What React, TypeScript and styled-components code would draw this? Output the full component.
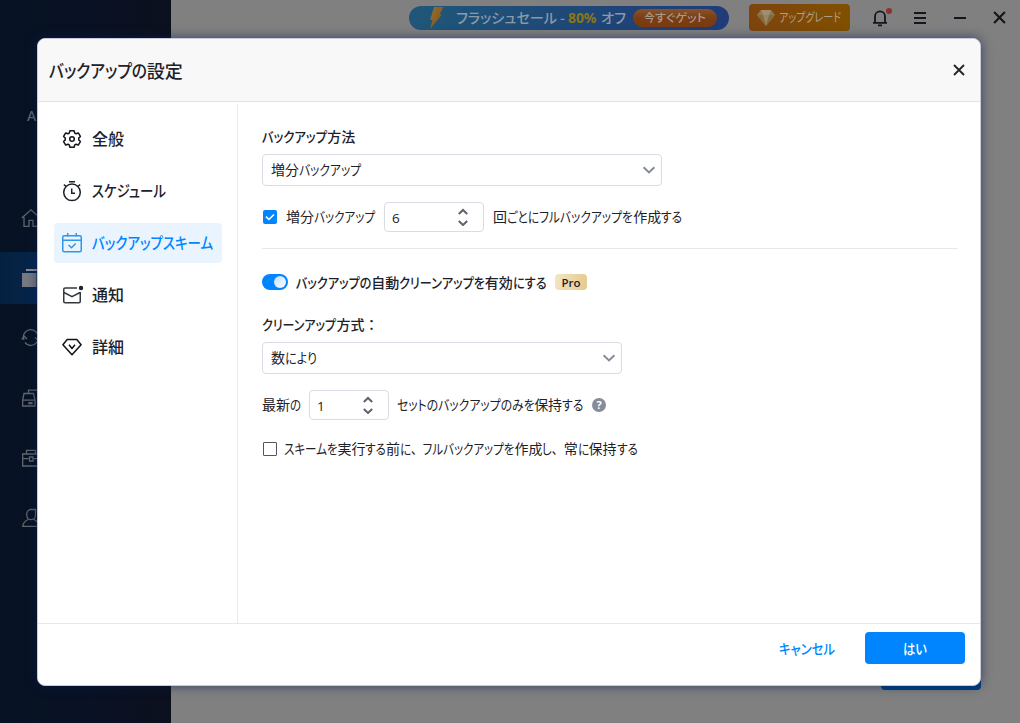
import React, { useLayoutEffect, useRef } from "react";
import styled, { createGlobalStyle } from "styled-components";

const GlobalStyle = createGlobalStyle`
  * { box-sizing: border-box; }
  html, body { margin: 0; padding: 0; overflow: hidden; }
  body { font-family: "Noto Sans CJK JP", "Noto Sans", sans-serif; color: #1d2129; }
  svg { display: block; flex: none; }
`;

/* ---------- Text with condensed kana ---------- */

const Line = styled.span<{ $size: number; $weight: number; $color?: string; $width: number; $lift: number }>`
  display: block;
  flex: none;
  width: ${(p) => p.$width}px;
  padding-bottom: ${(p) => p.$lift * 2}px;
  font-size: ${(p) => p.$size}px;
  font-weight: ${(p) => p.$weight};
  color: ${(p) => p.$color ?? "#1d2129"};
  line-height: 20px;
  white-space: nowrap;
  font-feature-settings: "palt";
`;

const KanaSlot = styled.span`
  display: inline-block;
`;

const KanaRun = styled.span`
  display: inline-block;
  transform-origin: 0 50%;
`;

const FullWidth = styled.span`
  font-feature-settings: normal;
`;

type LabelProps = { text: string; width: number; size?: number; weight?: number; color?: string; lift?: number };

function Label({ text, width, size = 14, weight = 400, color, lift = 1 }: LabelProps) {
  const ref = useRef<HTMLSpanElement>(null);
  const runs = text.match(/[\u3040-\u30ff、]+|：|[^\u3040-\u30ff、：]+/g) ?? [];

  useLayoutEffect(() => {
    const line = ref.current;
    if (!line) return;
    const kana = Array.from(line.querySelectorAll<HTMLElement>("[data-kana]"));
    const natural = kana.map((k) => k.offsetWidth);
    const kanaTotal = natural.reduce((a, b) => a + b, 0);
    const range = document.createRange();
    range.selectNodeContents(line);
    const total = range.getBoundingClientRect().width;
    if (!kanaTotal || !total) return;
    const factor = (width - (total - kanaTotal)) / kanaTotal;
    kana.forEach((k, i) => {
      k.style.transform = `scaleX(${factor})`;
      (k.parentElement as HTMLElement).style.width = `${natural[i] * factor}px`;
    });
  }, [text, width]);

  return (
    <Line ref={ref} $size={size} $weight={weight} $color={color} $width={width} $lift={lift}>
      {runs.map((r, i) => {
        if (r === "：") return <FullWidth key={i}>{r}</FullWidth>;
        if (!/[\u3040-\u30ff、]/.test(r)) return <React.Fragment key={i}>{r}</React.Fragment>;
        return (
          <KanaSlot key={i}>
            <KanaRun data-kana>
              {r.split(/(、)/).map((s, j) => (s === "、" ? <FullWidth key={j}>{s}</FullWidth> : s))}
            </KanaRun>
          </KanaSlot>
        );
      })}
    </Line>
  );
}

/* ---------- Application window behind the dialog ---------- */

const Window = styled.div`
  position: relative;
  display: flex;
  width: 1020px;
  height: 723px;
  overflow: hidden;
  background: #808080;
`;

const Sidebar = styled.aside`
  display: flex;
  flex-direction: column;
  width: 171px;
  height: 100%;
  background: linear-gradient(90deg, #061323 0%, #091124 50%, #0c101e 100%);
`;

const Account = styled.div`
  height: 192px;
  padding: 106px 0 0 27px;
  font: 500 14px/20px "Noto Sans", sans-serif;
  color: #66696f;
`;

const SideItem = styled.div<{ $active?: boolean }>`
  display: flex;
  align-items: center;
  height: 52px;
  margin-bottom: 8px;
  padding-left: 21px;
  background: ${(p) => (p.$active ? "linear-gradient(90deg, #05203f, #0a3c80)" : "none")};
`;

const Main = styled.main`
  display: flex;
  flex-direction: column;
  justify-content: space-between;
  flex: 1;
`;

const TitleBar = styled.header`
  display: flex;
  align-items: center;
  height: 35px;
  padding-left: 238px;
`;

const Promo = styled.div`
  display: flex;
  align-items: center;
  width: 320px;
  height: 24px;
  padding-left: 18px;
  border-radius: 12px;
  background: linear-gradient(90deg, #205779 0%, #1f4877 50%, #1f3c79 100%);
`;

const PromoText = styled.div`
  display: flex;
  align-items: center;
  gap: 3px;
  width: 177px;
  margin-left: 11px;
`;

const Discount = styled.b`
  width: 30px;
  font: 700 14px/20px "Noto Sans", sans-serif;
  letter-spacing: -0.1px;
  color: #8a7815;
`;

const PromoButton = styled.div`
  display: flex;
  align-items: center;
  justify-content: center;
  width: 84px;
  height: 18px;
  border-radius: 9px;
  background: linear-gradient(180deg, #8a5428 0%, #7b3d15 50%, #7c3b10 100%);
`;

const Upgrade = styled.div`
  display: flex;
  align-items: center;
  gap: 4px;
  width: 101px;
  height: 27px;
  margin-left: 20px;
  padding-left: 8px;
  border-radius: 4px;
  background: linear-gradient(90deg, #7e440e, #805000);
`;

const WindowControls = styled.div`
  display: flex;
  align-items: center;
  gap: 26px;
  margin-left: 20px;
`;

const BellSlot = styled.div`
  width: 17px;
`;

const HiddenAction = styled.div`
  align-self: flex-end;
  width: 100px;
  height: 32px;
  margin: 0 39px 33px 0;
  border-radius: 4px;
  background: #00417f;
`;

/* ---------- Dialog ---------- */

const Dialog = styled.section`
  position: absolute;
  left: 37px;
  top: 38px;
  display: flex;
  flex-direction: column;
  width: 944px;
  height: 648px;
  border: 1px solid #c9cbdc;
  border-radius: 8px;
  background: #fff;
  overflow: hidden;
`;

const Glow = styled.div`
  position: absolute;
  left: 37px;
  top: 38px;
  width: 944px;
  height: 648px;
  border-radius: 8px;
  box-shadow: 0 0 12px 0 rgba(7, 29, 76, 0.62);
`;

const DialogHeader = styled.div`
  display: flex;
  align-items: center;
  justify-content: space-between;
  height: 63px;
  padding: 0 15px 0 11px;
  border-bottom: 1px solid #e3e4e6;
  background: #f8f8f8;
`;

const Body = styled.div`
  display: flex;
  height: 521px;
`;

const Nav = styled.nav`
  display: flex;
  flex-direction: column;
  gap: 12px;
  width: 200px;
  margin-top: 2px;
  padding: 15px 15px 0 16px;
  border-right: 1px solid #e8eaec;
`;

const NavItem = styled.div<{ $active?: boolean }>`
  display: flex;
  align-items: center;
  gap: 8px;
  height: 40px;
  padding-left: 6px;
  border-radius: 4px;
  background: ${(p) => (p.$active ? "#e9f4ff" : "transparent")};
`;

const Content = styled.div`
  flex: 1;
  padding: 25px 22px 0 24px;
`;

const Row = styled.div<{ $h: number; $mt?: number; $gap?: number }>`
  display: flex;
  align-items: center;
  gap: ${(p) => p.$gap ?? 8}px;
  height: ${(p) => p.$h}px;
  margin-top: ${(p) => p.$mt ?? 0}px;
`;

const Select = styled.div<{ $w: number; $mt: number }>`
  display: flex;
  align-items: center;
  justify-content: space-between;
  width: ${(p) => p.$w}px;
  height: 32px;
  margin-top: ${(p) => p.$mt}px;
  padding: 0 5px 0 8px;
  border: 1px solid #d8dce4;
  border-radius: 4px;
`;

const Stepper = styled.div<{ $w: number }>`
  display: flex;
  align-items: center;
  justify-content: space-between;
  width: ${(p) => p.$w}px;
  height: 30px;
  padding: 0 15px 0 7px;
  border: 1px solid #d8dce4;
  border-radius: 4px;
  font: 400 13.5px/20px "Open Sans", sans-serif;
`;

const StepValue = styled.span`
  padding-top: 2px;
`;

const Checkbox = styled.div<{ $on?: boolean }>`
  display: flex;
  align-items: center;
  justify-content: center;
  width: 14px;
  height: 14px;
  margin-left: 1px;
  border: ${(p) => (p.$on ? "0" : "1px solid #50555e")};
  border-radius: ${(p) => (p.$on ? 2 : 1)}px;
  background: ${(p) => (p.$on ? "#0085ff" : "#fff")};
`;

const Divider = styled.div`
  height: 1px;
  margin-top: 16px;
  background: #e6e8ea;
`;

const Toggle = styled.div`
  display: flex;
  align-items: center;
  justify-content: flex-end;
  width: 26px;
  height: 16px;
  padding-right: 2px;
  border-radius: 8px;
  background: #0085ff;
`;

const Knob = styled.div`
  width: 12px;
  height: 12px;
  border-radius: 50%;
  background: linear-gradient(135deg, #bfdfff, #fff);
`;

const Pro = styled.span`
  width: 32px;
  height: 16px;
  border-radius: 4px;
  background: linear-gradient(100deg, #f2e6c4, #e6c98c);
  font: 600 11.5px/17px "Open Sans", sans-serif;
  text-align: center;
`;

const Help = styled.span`
  width: 14px;
  height: 14px;
  border-radius: 50%;
  background: #868c98;
  color: #fff;
  font: 700 11px/14px "Open Sans", sans-serif;
  text-align: center;
`;

const Footer = styled.div`
  display: flex;
  justify-content: flex-end;
  gap: 30px;
  flex: 1;
  padding: 8px 15px 0 0;
  border-top: 1px solid #e6e8ea;
`;

const Cancel = styled.div`
  display: flex;
  align-items: center;
  height: 32px;
`;

const Confirm = styled.div`
  display: flex;
  align-items: center;
  justify-content: center;
  width: 100px;
  height: 32px;
  border-radius: 4px;
  background: #0085ff;
`;

/* ---------- Icons ---------- */

const Chevron = () => (
  <svg width="14" height="10" viewBox="0 0 14 10" fill="none" stroke="#838a97" strokeWidth="1.9">
    <path d="M1.6 2.2 7 7.4l5.4-5.2" />
  </svg>
);

const UpDown = () => (
  <svg width="10" height="18" viewBox="0 0 10 18" fill="none" stroke="#5d6470" strokeWidth="2">
    <path d="M.8 6 5 2l4.200 4M.8 13l4.200 4 4.200-4" />
  </svg>
);

const Cross = ({ size, color, sw = 2 }: { size: number; color: string; sw?: number }) => (
  <svg width={size} height={size} viewBox="0 0 12 12" fill="none" stroke={color} strokeWidth={sw}>
    <path d="M1 1l10 10M11 1 1 11" />
  </svg>
);

const Svg = styled.svg.attrs({ width: 24, height: 24, viewBox: "0 0 24 24", fill: "none" })<{ $c?: string }>`
  stroke: ${(p) => p.$c ?? "#1d2129"};
  stroke-width: 1.5;
`;

const Gear = () => (
  <Svg $c="#15171c">
    <path
      strokeLinejoin="round"
      d="M9.900 3.750h4.200l.6 2.300 1.300.7 2.300-.8 2.100 3.500-1.700 1.700v1.700l1.700 1.700-2.100 3.500-2.300-.8-1.300.7-.6 2.300H9.900l-.6-2.300-1.300-.7-2.300.8-2.100-3.500 1.700-1.700v-1.700L3.600 9.450l2.100-3.500 2.300.8 1.300-.7z"
    />
    <circle cx="12" cy="12" r="2.300" />
  </Svg>
);

const Timer = () => (
  <Svg>
    <circle cx="12" cy="13.300" r="8.300" />
    <path d="M9 2.750h6M3.800 5.700 6.300 7.500M20.200 5.700 17.700 7.500M11.700 9.500v4.700H15" />
  </Svg>
);

const CalendarCheck = () => (
  <Svg $c="#2f97ea">
    <rect x="2.750" y="4.750" width="18.500" height="16" rx="1.500" />
    <path d="M3 9.300h18M7.700 2v3.500M16.300 2v3.500M8.500 14l3 2.700 4.200-4.200" />
  </Svg>
);

const MailDot = () => (
  <Svg $c="#34383f">
    <path d="M17 5H5.200C4.200 5 3.750 5.500 3.750 6.300V18.500c0 .8.500 1.200 1.300 1.200H19c.8 0 1.250-.4 1.250-1.200V9M4 9.500l8 4.200 8-4.200" />
    <circle cx="21" cy="5" r="2.200" fill="#1d2129" stroke="none" />
  </Svg>
);

const Gem = () => (
  <Svg $c="#101216">
    <path strokeLinejoin="round" d="M7.200 4.600h9.600l4.300 5.200L12 19.700 2.900 9.800zM9 9.800l3 3.700 3-3.700" />
  </Svg>
);

const SideSvg = styled.svg.attrs({ width: 20, height: 20, viewBox: "0 0 20 20", fill: "none" })`
  stroke: #62666d;
  stroke-width: 1.300;
`;

const Bolt = () => (
  <svg width="18" height="22" viewBox="0 0 18 22">
    <defs>
      <linearGradient id="bolt" x1="0" y1="0" x2="1" y2="1">
        <stop offset="0" stopColor="#93702f" />
        <stop offset="1" stopColor="#855018" />
      </linearGradient>
    </defs>
    <path d="M7 0h9.500l-4 7.500H15L3 22l2.500-9H3z" fill="url(#bolt)" />
  </svg>
);

const Diamond = () => (
  <svg width="18" height="16" viewBox="0 0 18 16">
    <path d="M4 0h10l4 5-9 11L0 5z" fill="#8e7955" />
    <path d="M4 0h10l-2 5H6z" fill="#a18e6c" />
    <path d="M0 5h18L9 16z" fill="#846a40" />
    <path d="M6 5h6L9 16z" fill="#9b8560" />
  </svg>
);

export default function App() {
  return (
    <>
      <GlobalStyle />
      <Window>
        <Sidebar>
          <Account>A</Account>
          <SideItem>
            <SideSvg><path d="M.8 10 10 1.800 19.200 10M3 9v9.300h5v-6h4v6h5V9" /></SideSvg>
          </SideItem>
          <SideItem $active>
            <SideSvg>
              <path d="M5 1h15v14h-2V3H5z" fill="#8d9197" stroke="none" />
              <path d="M1 5h14.500v14H1z" fill="#777b81" stroke="none" />
            </SideSvg>
          </SideItem>
          <SideItem>
            <SideSvg><path d="M3 12A7.300 7.300 0 0 1 16.500 6M17 9A7.300 7.300 0 0 1 4 14.500M.8 11.500 3 8l3 3M14 9.500l3 2.500 2-3" /></SideSvg>
          </SideItem>
          <SideItem>
            <SideSvg><path d="M3 5.500h9.500L14 12v6H1.700v-6zM1.700 12.200H14M8 14.700h3v1H8zM7.500 5V2.200H19" /></SideSvg>
          </SideItem>
          <SideItem>
            <SideSvg><path d="M1.700 6h17v12h-17zM5.500 6V2.300h9V6M1.700 10.700h6M12 10.700h7M8.500 9h3.500v4H8.500z" /></SideSvg>
          </SideItem>
          <SideItem>
            <SideSvg><path d="M10 1.500h4.500V7c0 3-2 4.700-4.500 4.700S5.700 9.500 5.700 6.500 7.500 1.500 10 1.500zM7 11.500C4 13 2 15 1.800 18.300h16C17.500 15 16 13 13 11.500" /></SideSvg>
          </SideItem>
        </Sidebar>
        <Main>
          <TitleBar>
            <Promo>
              <Bolt />
              <PromoText>
                <Label text="フラッシュセール" width={101} weight={500} color="#8b9aa8" lift={0.5} />
                <Label text="-" width={5} weight={500} color="#8b9aa8" lift={0.5} />
                <Discount>80%</Discount>
                <Label text="オフ" width={25} weight={500} color="#8b9aa8" lift={0.5} />
              </PromoText>
              <PromoButton>
                <Label text="今すぐゲット" width={62} size={11} weight={500} color="#a99a8c" lift={0.5} />
              </PromoButton>
            </Promo>
            <Upgrade>
              <Diamond />
              <Label text="アップグレード" width={62} size={12.5} weight={400} color="#b09f88" lift={0.5} />
            </Upgrade>
            <WindowControls>
              <BellSlot>
                <svg width="22" height="22" viewBox="0 0 22 22" fill="none" stroke="#14161b" strokeWidth="1.800">
                  <path d="M3 15.800h14M5 15.500V9.300a5 5 0 0 1 10 0v6.200M8 18.300h4" />
                  <circle cx="19" cy="4" r="3" fill="#8b332f" stroke="none" />
                </svg>
              </BellSlot>
              <svg width="14" height="14" viewBox="0 0 14 14" stroke="#14161b" strokeWidth="2">
                <path d="M1 2h12M1 7h12M1 12h12" />
              </svg>
              <svg width="14" height="14" viewBox="0 0 14 14" stroke="#14161b" strokeWidth="2">
                <path d="M1 7h12" />
              </svg>
              <Cross size={13} color="#14161b" />
            </WindowControls>
          </TitleBar>
          <HiddenAction />
        </Main>

        <Glow />
        <Dialog>
          <DialogHeader>
            <Label text="バックアップの設定" width={134} size={18} weight={500} lift={0} />
            <Cross size={12} color="#24272e" sw={1.9} />
          </DialogHeader>
          <Body>
            <Nav>
              <NavItem><Gear /><Label text="全般" width={32} size={16} weight={500} /></NavItem>
              <NavItem><Timer /><Label text="スケジュール" width={74} size={16} weight={500} /></NavItem>
              <NavItem $active>
                <CalendarCheck />
                <Label text="バックアップスキーム" width={121} size={16} weight={500} color="#0085ff" />
              </NavItem>
              <NavItem><MailDot /><Label text="通知" width={32} size={16} weight={500} /></NavItem>
              <NavItem><Gem /><Label text="詳細" width={32} size={16} weight={500} /></NavItem>
            </Nav>
            <Content>
              <Row $h={20}><Label text="バックアップ方法" width={93} weight={500} /></Row>
              <Select $w={400} $mt={7}><Label text="増分バックアップ" width={90} /><Chevron /></Select>
              <Row $h={30} $mt={16} $gap={9}>
                <Checkbox $on>
                  <svg width="10" height="8" viewBox="0 0 10 8" fill="none" stroke="#fff" strokeWidth="1.600">
                    <path d="M1 3.700 3.900 6.500 9 1.500" />
                  </svg>
                </Checkbox>
                <Label text="増分バックアップ" width={89} />
                <Stepper $w={100}><StepValue>6</StepValue><UpDown /></Stepper>
                <Label text="回ごとにフルバックアップを作成する" width={189} />
              </Row>
              <Divider />
              <Row $h={20} $mt={23}>
                <Toggle><Knob /></Toggle>
                <Label text="バックアップの自動クリーンアップを有効にする" width={251} weight={500} lift={0.5} />
                <Pro>Pro</Pro>
              </Row>
              <Row $h={20} $mt={22}><Label text="クリーンアップ方式：" width={116} weight={500} lift={0.5} /></Row>
              <Select $w={360} $mt={8}><Label text="数により" width={46} /><Chevron /></Select>
              <Row $h={30} $mt={16} $gap={8}>
                <Label text="最新の" width={39} />
                <Stepper $w={80}><StepValue>1</StepValue><UpDown /></Stepper>
                <Label text="セットのバックアップのみを保持する" width={187} />
                <Help>?</Help>
              </Row>
              <Row $h={20} $mt={19} $gap={7}>
                <Checkbox />
                <Label text="スキームを実行する前に、フルバックアップを作成し、常に保持する" width={354} />
              </Row>
            </Content>
          </Body>
          <Footer>
            <Cancel><Label text="キャンセル" width={56} weight={500} color="#0085ff" lift={0.5} /></Cancel>
            <Confirm><Label text="はい" width={24} weight={500} color="#fff" lift={0.5} /></Confirm>
          </Footer>
        </Dialog>
      </Window>
    </>
  );
}
